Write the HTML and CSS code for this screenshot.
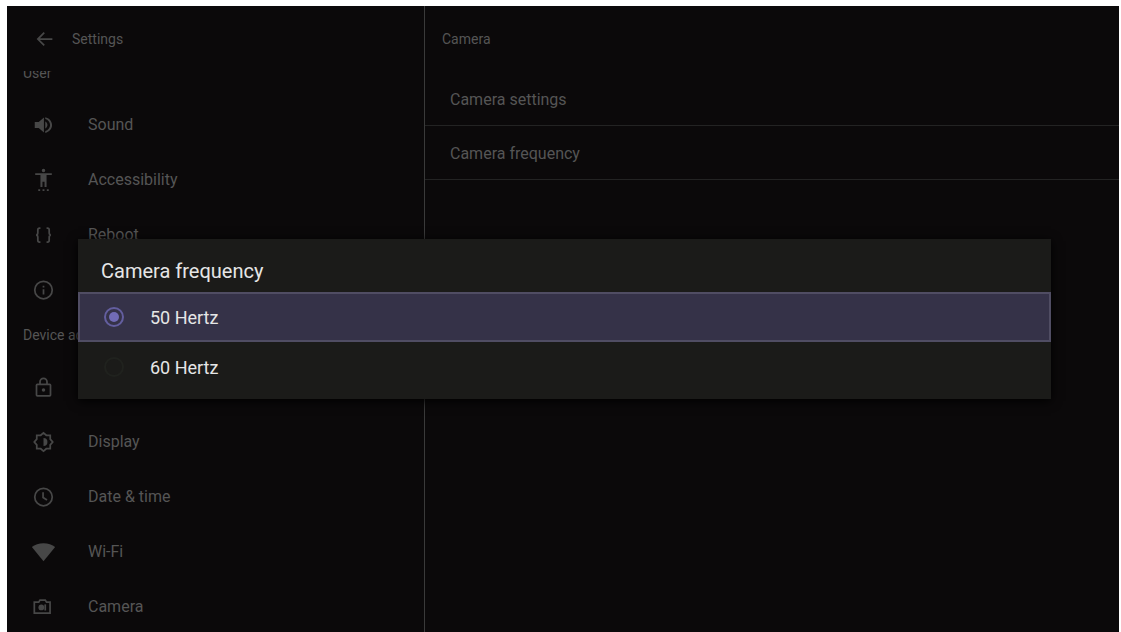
FILE: index.html
```
<!DOCTYPE html>
<html lang="en">
<head>
    <meta charset="UTF-8">
    <meta name="viewport" content="width=device-width, initial-scale=1.0">
    <title>Settings</title>
    <link rel="stylesheet" href="styles.css">
</head>
<body>
    <div class="screen">
        <nav class="sidebar">
            <div class="topbar">
                <button type="button" class="back-button" aria-label="Back">
                    <svg class="icon" viewBox="0 0 24 24"><path d="M21 11H6.8l5.6-5.6L11 4l-8 8 8 8 1.4-1.4L6.8 13H21z"/></svg>
                </button>
                <span>Settings</span>
            </div>
            <div class="menu">
                <h2 class="group first">User</h2>
                <a href="#sound" class="item">
                    <svg class="icon" viewBox="0 0 24 24"><path d="M2 8.500v7h4.500l6 5v-17l-6 5zM14 8v8c1.500-.7 2.500-2.200 2.500-4S15.500 8.700 14 8zM14 3v2.200c3.200.8 5.500 3.500 5.500 6.800s-2.300 6-5.500 6.800V21c4.500-.9 7.800-4.600 7.800-9S18.500 3.900 14 3z"/></svg>
                    <span>Sound</span>
                </a>
                <a href="#accessibility" class="item">
                    <svg class="icon tall" viewBox="0 0 24 28"><path d="M12 1a2 2 0 1 1 0 4 2 2 0 0 1 0-4zM21.500 8.200H15.500V22h-2.300v-6h-2.400v6H8.500V8.200h-6V6.200h19zM6 24.500h2.200v2.200H6zM10.900 24.500h2.200v2.200h-2.200zM15.800 24.500H18v2.200h-2.200z"/></svg>
                    <span>Accessibility</span>
                </a>
                <a href="#reboot" class="item">
                    <svg class="icon line" viewBox="0 0 24 24"><path d="M8.500 4H7.500Q5.500 4 5.500 6v3.500Q5.500 12 3.500 12q2 0 2 2.500V18q0 2 2 2h1M15.500 4h1q2 0 2 2v3.500q0 2.500 2 2.500-2 0-2 2.500V18q0 2-2 2h-1"/></svg>
                    <span>Reboot</span>
                </a>
                <a href="#about" class="item" aria-label="About">
                    <svg class="icon line" viewBox="0 0 24 24"><circle cx="12" cy="12" r="10"/><path d="M12 11v6M12 7v2"/></svg>
                </a>
                <h2 class="group">Device administration</h2>
                <a href="#admin" class="item" aria-label="Security">
                    <svg class="icon line" viewBox="0 0 24 24"><rect x="4" y="9" width="16" height="13" rx="1"/><path d="M8 9V6a4 4 0 0 1 8 0v3"/><circle class="solid" cx="12" cy="15.500" r="2"/></svg>
                </a>
                <a href="#display" class="item">
                    <svg class="icon line" viewBox="0 0 24 24"><path d="M12 1.500 15.200 4.300H19.700V8.800L22.500 12 19.700 15.200V19.700H15.200L12 22.500 8.800 19.700H4.300V15.200L1.500 12 4.300 8.800V4.300H8.800z"/><path class="solid" d="M12 7.500a4.500 4.500 0 0 1 0 9z"/></svg>
                    <span>Display</span>
                </a>
                <a href="#date" class="item">
                    <svg class="icon line" viewBox="0 0 24 24"><circle cx="12" cy="12" r="10"/><path d="M11.500 6.500V12.500l4.500 3"/></svg>
                    <span>Date &amp; time</span>
                </a>
                <a href="#wifi" class="item">
                    <svg class="icon wide" viewBox="0 0 26 24"><path d="M13 22 .3 6.500C3.500 4 8 2.500 13 2.500S22.500 4 25.700 6.500z"/></svg>
                    <span>Wi-Fi</span>
                </a>
                <a href="#camera" class="item">
                    <svg class="icon line" viewBox="0 0 24 24"><path d="M1.500 6.500H6.500l1.500-2.500h6L15.500 6.500h4V19h-18z"/><circle class="solid" cx="9.500" cy="12.500" r="3.300"/><path d="M14 9v7"/></svg>
                    <span>Camera</span>
                </a>
            </div>
        </nav>

        <main class="content">
            <h1 class="content-title">Camera</h1>
            <a href="#camera-settings" class="row">Camera settings</a>
            <a href="#camera-frequency" class="row">Camera frequency</a>
        </main>

        <div class="overlay">
            <form class="dialog" role="dialog" aria-labelledby="dialogTitle">
                <h2 class="dialog-title" id="dialogTitle">Camera frequency</h2>
                <label class="option selected" for="hertz50">
                    <input type="radio" id="hertz50" name="frequency" value="50" checked>
                    <span>50 Hertz</span>
                </label>
                <label class="option" for="hertz60">
                    <input type="radio" id="hertz60" name="frequency" value="60">
                    <span>60 Hertz</span>
                </label>
            </form>
        </div>
    </div>
</body>
</html>
```
FILE: styles.css
```
* {
    box-sizing: border-box;
}

body {
    margin: 0;
    padding: 6px 2px 0 7px;
    height: 100vh;
    overflow: hidden;
    background-color: #fff;
    font-family: Roboto, Arial, sans-serif;
}

h1, h2 {
    margin: 0;
    font-weight: normal;
}

a {
    color: inherit;
    text-decoration: none;
}

.screen {
    position: relative;
    display: flex;
    height: 100%;
    background-color: #0b090a;
    color: #555;
}

/* left menu */
.sidebar {
    display: flex;
    flex-direction: column;
    flex: 0 0 38%;
    max-width: 418px;
    border-right: 1px solid #3a3a3a;
}

.topbar {
    display: flex;
    align-items: center;
    gap: 17px;
    height: 65px;
    padding-left: 27px;
    font-size: 14px;
    flex-shrink: 0;
}

.back-button {
    display: flex;
    padding: 0;
    border: none;
    background: none;
    color: inherit;
    cursor: pointer;
}

.menu {
    flex: 1;
    min-height: 0;
    overflow: hidden;
}

.group {
    height: 42px;
    padding-left: 16px;
    font-size: 14px;
    line-height: 36px;
}

.group.first {
    margin-top: -16px;
}

.item {
    display: flex;
    align-items: center;
    gap: 34px;
    height: 55px;
    padding-left: 26px;
    font-size: 16px;
}

.icon {
    width: 21px;
    height: 22px;
    fill: #474747;
}

.icon.tall {
    height: 26px;
}

.icon.wide {
    width: 25px;
    margin: 0 -2px;
}

.icon.line {
    fill: none;
    stroke: #474747;
    stroke-width: 2;
}

.icon .solid {
    fill: #474747;
    stroke: none;
}

/* right side */
.content {
    flex: 1;
}

.content-title {
    height: 66px;
    padding-left: 17px;
    font-size: 14px;
    line-height: 66px;
}

.row {
    display: block;
    height: 54px;
    padding-left: 25px;
    border-bottom: 1px solid #232323;
    font-size: 16px;
    line-height: 55px;
}

/* dialog */
.overlay {
    position: absolute;
    inset: 0;
    display: flex;
    align-items: center;
    padding: 0 68px 0 71px;
}

.dialog {
    flex: 1;
    padding: 11px 0 7px;
    background-color: #1b1b19;
    box-shadow: 0 2px 10px #000;
    color: #e6e6e6;
}

.dialog-title {
    padding-left: 23px;
    font-size: 20px;
    line-height: 42px;
}

.option {
    display: flex;
    align-items: center;
    gap: 26px;
    height: 50px;
    padding-left: 24px;
    border: 2px solid transparent;
    font-size: 18px;
    cursor: pointer;
}

.option.selected {
    background-color: #353248;
    border-color: #504d63;
}

.option input {
    appearance: none;
    display: grid;
    place-items: center;
    width: 20px;
    height: 20px;
    margin: 0;
    border: 2px solid #20221e;
    border-radius: 50%;
}

.option input:checked {
    border-color: #635e9f;
}

.option input:checked::before {
    content: "";
    width: 10px;
    height: 10px;
    border-radius: 50%;
    background-color: #716bb5;
}
```
